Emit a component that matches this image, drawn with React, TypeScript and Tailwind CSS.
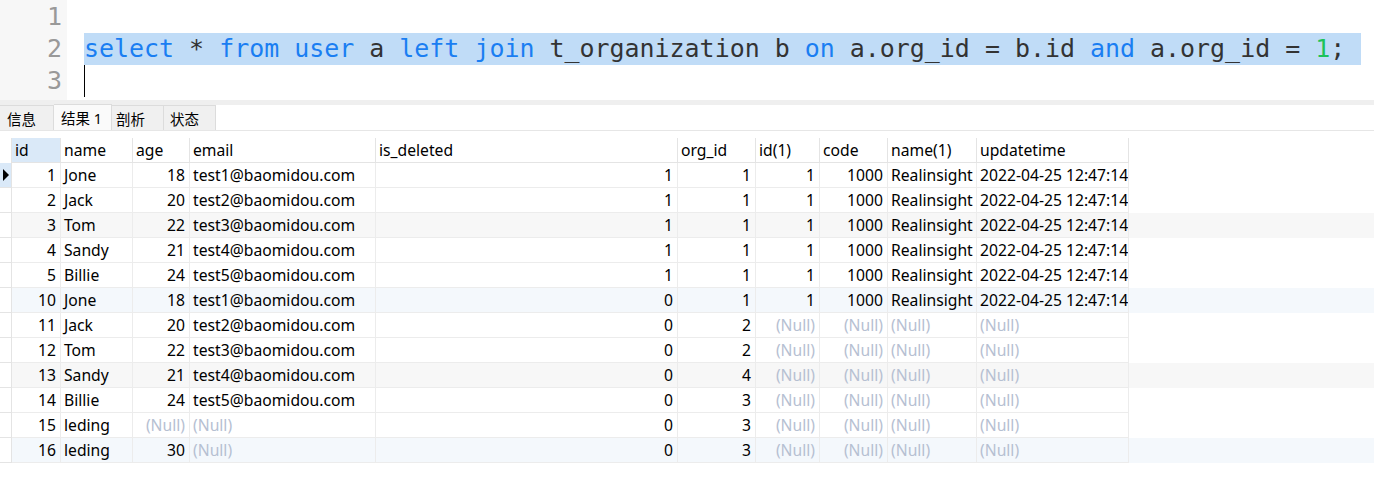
import React from "react";

type Cell = string | number | null;

const cols: { name: string; w: number; align: "l" | "r" }[] = [
  { name: "id", w: 49, align: "r" },
  { name: "name", w: 72, align: "l" },
  { name: "age", w: 57, align: "r" },
  { name: "email", w: 186, align: "l" },
  { name: "is_deleted", w: 302, align: "r" },
  { name: "org_id", w: 78, align: "r" },
  { name: "id(1)", w: 64, align: "r" },
  { name: "code", w: 68, align: "r" },
  { name: "name(1)", w: 89, align: "l" },
  { name: "updatetime", w: 152, align: "l" },
];

const T = "2022-04-25 12:47:14";
const rows: Cell[][] = [
  [1, "Jone", 18, "test1@baomidou.com", 1, 1, 1, 1000, "Realinsight", T],
  [2, "Jack", 20, "test2@baomidou.com", 1, 1, 1, 1000, "Realinsight", T],
  [3, "Tom", 22, "test3@baomidou.com", 1, 1, 1, 1000, "Realinsight", T],
  [4, "Sandy", 21, "test4@baomidou.com", 1, 1, 1, 1000, "Realinsight", T],
  [5, "Billie", 24, "test5@baomidou.com", 1, 1, 1, 1000, "Realinsight", T],
  [10, "Jone", 18, "test1@baomidou.com", 0, 1, 1, 1000, "Realinsight", T],
  [11, "Jack", 20, "test2@baomidou.com", 0, 2, null, null, null, null],
  [12, "Tom", 22, "test3@baomidou.com", 0, 2, null, null, null, null],
  [13, "Sandy", 21, "test4@baomidou.com", 0, 4, null, null, null, null],
  [14, "Billie", 24, "test5@baomidou.com", 0, 3, null, null, null, null],
  [15, "leding", null, null, 0, 3, null, null, null, null],
  [16, "leding", 30, null, 0, 3, null, null, null, null],
];

const rowBg = [
  "bg-white",
  "bg-white",
  "bg-[#f7f7f7]",
  "bg-white",
  "bg-white",
  "bg-[#f4f8fc]",
  "bg-white",
  "bg-white",
  "bg-[#f7f7f7]",
  "bg-white",
  "bg-white",
  "bg-[#f4f8fc]",
];

const K = "text-[#1a7ef2]";
const D = "text-[#333333]";

function Code() {
  const parts: [string, string][] = [
    ["select", K],
    [" * ", D],
    ["from", K],
    [" ", D],
    ["user", K],
    [" a ", D],
    ["left", K],
    [" ", D],
    ["join", K],
    [" t_organization b ", D],
    ["on", K],
    [" a.org_id = b.id ", D],
    ["and", K],
    [" a.org_id = ", D],
    ["1", "text-[#1ec25a]"],
    [";", D],
  ];
  return (
    <>
      {parts.map(([t, c], i) => (
        <span key={i} className={c}>
          {t}
        </span>
      ))}
    </>
  );
}

export default function App() {
  const mono = { fontFamily: '"DejaVu Sans Mono", monospace' };
  const sans = { fontFamily: '"Noto Sans", "Noto Sans CJK SC", sans-serif' };
  return (
    <div className="w-[1374px] h-[480px] bg-white overflow-hidden">
      {/* Editor */}
      <div className="flex h-[100px] text-[24.95px] leading-[32px]" style={mono}>
        <div className="w-[67px] bg-[#f7f7f7] pt-[1px] pr-[5px] text-right text-[#999999]">
          <div>1</div>
          <div>2</div>
          <div>3</div>
        </div>
        <div className="flex-1 pt-[1px] pl-[17px]">
          <div className="h-[32px]"></div>
          <div className="h-[32px] flex">
            <div className="bg-[#c0dcf7] pr-[16px] whitespace-pre">
              <Code />
            </div>
          </div>
          <div className="h-[32px] flex items-start">
            <div className="w-px h-[32px] bg-black"></div>
          </div>
        </div>
      </div>
      {/* Tabs */}
      <div className="h-[5px] bg-[#efefef]"></div>
      <div className="flex h-[26px] items-end bg-white border-b border-[#e6e6e6] text-[14.5px] text-black" style={sans}>
        <div className="w-[54px] h-[25px] bg-[#f0f0f0] border-r border-t border-[#dcdcdc] pl-[7px] leading-[26px]">信息</div>
        <div className="w-[58px] h-[26px] bg-[#fafafa] border-r border-t border-[#dcdcdc] pl-[7px] leading-[26px]">结果 1</div>
        <div className="w-[52px] h-[25px] bg-[#f0f0f0] border-r border-t border-[#dcdcdc] pl-[4px] leading-[26px]">剖析</div>
        <div className="w-[52px] h-[25px] bg-[#f0f0f0] border-r border-t border-[#dcdcdc] pl-[6px] leading-[26px]">状态</div>
      </div>
      {/* Table */}
      <div className="pt-[7px] text-[15.7px] text-black" style={sans}>
        <div className="flex h-[25px]">
          <div className="w-[12px] border-r border-[#e4e4e4]"></div>
          {cols.map((c, i) => (
            <div
              key={c.name}
              className={`border-r border-b border-[#e4e4e4] pl-[3px] leading-[25px] whitespace-nowrap overflow-hidden ${
                i === 0 ? "bg-[#dae9f8]" : "bg-white"
              }`}
              style={{ width: c.w }}
            >
              {c.name}
            </div>
          ))}
        </div>
        {rows.map((r, ri) => (
          <div key={ri} className={`flex h-[25px] ${rowBg[ri]}`}>
            <div
              className={`w-[12px] border-r border-b border-[#e4e4e4] flex items-center justify-start ${
                ri === 0 ? "bg-[#dae9f8]" : "bg-white"
              }`}
            >
              {ri === 0 && (
                <svg width="7" height="12" viewBox="0 0 7 12" className="ml-[3px]">
                  <path d="M0 0 L6 6 L0 12 Z" fill="#000" />
                </svg>
              )}
            </div>
            {r.map((v, ci) => {
              const c = cols[ci];
              const isNull = v === null;
              return (
                <div
                  key={ci}
                  className={`border-r border-b border-[#ececec] leading-[25px] whitespace-nowrap overflow-hidden ${
                    c.align === "r" ? "text-right pr-[4px]" : "text-left pl-[3px]"
                  } ${isNull ? "text-[#b6c0d2]" : "text-black"}`}
                  style={{ width: c.w }}
                >
                  {isNull ? "(Null)" : v}
                </div>
              );
            })}
          </div>
        ))}
      </div>
    </div>
  );
}
